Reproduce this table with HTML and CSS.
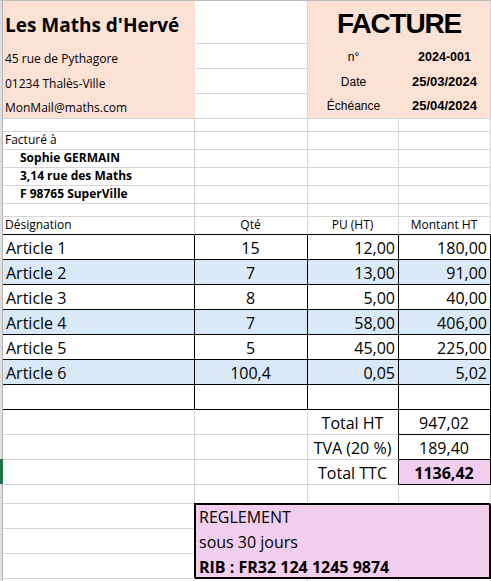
FILE: index.html
```html
<!DOCTYPE html>
<html lang="fr">
<head>
<meta charset="utf-8">
<title>Facture</title>
<link rel="stylesheet" href="styles.css">
</head>
<body>
<div class="sheet">
  <div class="gutter"></div>

  <div class="brand">
    <div class="brand-name">Les Maths d'Hervé</div>
    <div class="brand-line">45 rue de Pythagore</div>
    <div class="brand-line">01234 Thalès-Ville</div>
    <div class="brand-line">MonMail@maths.com</div>
  </div>

  <div class="inv">
    <div class="inv-title">FACTURE</div>
    <div class="inv-label">n°</div>
    <div class="inv-value">2024-001</div>
    <div class="inv-label">Date</div>
    <div class="inv-value date">25/03/2024</div>
    <div class="inv-label">Échéance</div>
    <div class="inv-value date">25/04/2024</div>
  </div>

  <!-- column B, rows 1-4 -->
  <div class="c"></div>
  <div class="c"></div>
  <div class="c"></div>
  <div class="c"></div>

  <!-- row 5 -->
  <div class="c"></div><div class="c"></div><div class="c"></div><div class="c"></div>

  <!-- rows 6-9 : client -->
  <div class="c cust">Facturé à</div><div class="c"></div><div class="c"></div><div class="c"></div>
  <div class="c cust bold indent">Sophie GERMAIN</div><div class="c"></div><div class="c"></div><div class="c"></div>
  <div class="c cust bold indent">3,14 rue des Maths</div><div class="c"></div><div class="c"></div><div class="c"></div>
  <div class="c cust bold indent">F 98765 SuperVille</div><div class="c"></div><div class="c"></div><div class="c"></div>

  <!-- row 10 -->
  <div class="c"></div><div class="c"></div><div class="c"></div><div class="c"></div>

  <!-- row 11 : headers -->
  <div class="c head">Désignation</div>
  <div class="c head mid">Qté</div>
  <div class="c head mid">PU (HT)</div>
  <div class="c head mid">Montant HT</div>

  <!-- rows 12-17 : articles -->
  <div class="c big tb art">Article 1</div><div class="c big tb mid">15</div><div class="c big tb num">12,00</div><div class="c big tb num">180,00</div>
  <div class="c big tb art blue">Article 2</div><div class="c big tb mid blue">7</div><div class="c big tb num blue">13,00</div><div class="c big tb num blue">91,00</div>
  <div class="c big tb art">Article 3</div><div class="c big tb mid">8</div><div class="c big tb num">5,00</div><div class="c big tb num">40,00</div>
  <div class="c big tb art blue">Article 4</div><div class="c big tb mid blue">7</div><div class="c big tb num blue">58,00</div><div class="c big tb num blue">406,00</div>
  <div class="c big tb art">Article 5</div><div class="c big tb mid">5</div><div class="c big tb num">45,00</div><div class="c big tb num">225,00</div>
  <div class="c big tb art blue">Article 6</div><div class="c big tb mid blue">100,4</div><div class="c big tb num blue">0,05</div><div class="c big tb num blue">5,02</div>

  <!-- row 18 -->
  <div class="c tb"></div><div class="c tb"></div><div class="c tb"></div><div class="c tb"></div>

  <!-- rows 19-21 : totals -->
  <div class="c"></div><div class="c"></div><div class="c big mid edge">Total HT</div><div class="c big mid tb">947,02</div>
  <div class="c"></div><div class="c"></div><div class="c big mid edge">TVA (20 %)</div><div class="c big mid tb">189,40</div>
  <div class="c"></div><div class="c"></div><div class="c big mid edge">Total TTC</div><div class="c big mid tb pink bold">1136,42</div>

  <!-- row 22 -->
  <div class="c"></div><div class="c"></div><div class="c"></div><div class="c"></div>

  <!-- column A, rows 23-25 -->
  <div class="c"></div>
  <div class="c"></div>
  <div class="c"></div>

  <!-- row 26 -->
  <div class="c"></div><div class="c"></div><div class="c"></div><div class="c"></div>

  <div class="reg">
    <div class="reg-line">REGLEMENT</div>
    <div class="reg-line">sous 30 jours</div>
    <div class="reg-line bold">RIB : FR32 124 1245 9874</div>
  </div>
</div>
</body>
</html>
```

FILE: styles.css
```css
* {
  box-sizing: border-box;
}

html,
body {
  margin: 0;
  padding: 0;
  background: #ffffff;
  overflow: hidden;
}

.sheet {
  display: grid;
  width: 491px;
  grid-template-columns: 3px 192px 113px 91px 92px;
  grid-template-rows: 43px repeat(3, 25px) 13px repeat(4, 18px) 13px 18px repeat(10, 25px) 19px repeat(3, 25px) 10px;
  border-top: 1px solid #bdbdbd;
  font-family: "Open Sans", sans-serif;
  color: #000000;
}

.gutter {
  grid-column: 1;
  grid-row: 1 / -1;
  background:
    linear-gradient(#217346, #217346) 0 458px / 3px 25px no-repeat,
    linear-gradient(#b4b4b4, #b4b4b4) 2px 0 / 1px 100% no-repeat,
    repeating-conic-gradient(#cfcfcf 0 25%, #f3eef2 0 50%) 0 0 / 2px 2px;
}

/* ---------- generic cell ---------- */
.c {
  display: flex;
  align-items: flex-end;
  min-width: 0;
  white-space: nowrap;
  border-right: 1px solid #d6d6d6;
  border-bottom: 1px solid #d6d6d6;
  padding: 0 3px 3px 2px;
  font-size: 12px;
  line-height: 12px;
}

.big {
  font-size: 16px;
  line-height: 16px;
}

.mid {
  justify-content: center;
}

.num {
  justify-content: flex-end;
}

.art {
  padding-left: 3px;
}

.bold {
  font-weight: 700;
}

.indent {
  padding-left: 17px;
}

.head {
  border-bottom-color: #000000;
}

.tb {
  border-right-color: #000000;
  border-bottom-color: #000000;
}

.edge {
  border-right-color: #000000;
}

.blue {
  background: #dae9f8;
}

.pink {
  background: #f2ceef;
}

/* ---------- company block ---------- */
.brand {
  grid-column: 2;
  grid-row: 1 / span 4;
  display: grid;
  grid-template-rows: 43px 25px 25px 1fr;
  background: #fbe2d5;
  border-right: 1px solid #fbe2d5;
  border-bottom: 1px solid #d6d6d6;
  padding-left: 2px;
}

.brand-name {
  display: flex;
  align-items: flex-end;
  padding-bottom: 9px;
  font-size: 19px;
  line-height: 19px;
  font-weight: 700;
  white-space: nowrap;
}

.brand-line {
  display: flex;
  align-items: flex-end;
  padding-bottom: 4px;
  font-size: 12px;
  line-height: 12px;
  white-space: nowrap;
}

/* ---------- invoice block ---------- */
.inv {
  grid-column: 4 / span 2;
  grid-row: 1 / span 4;
  display: grid;
  grid-template-columns: 91px 1fr;
  grid-template-rows: 43px 25px 25px 1fr;
  background: #fbe2d5;
  border-right: 1px solid #d6d6d6;
  border-bottom: 1px solid #d6d6d6;
  font-family: "Liberation Sans", Arial, sans-serif;
}

.inv-title {
  grid-column: 1 / -1;
  display: flex;
  justify-content: center;
  align-items: flex-end;
  padding-bottom: 6px;
  font-size: 28px;
  line-height: 28px;
  font-weight: 700;
  letter-spacing: -1.2px;
}

.inv-label,
.inv-value {
  display: flex;
  justify-content: center;
  align-items: flex-end;
  padding-bottom: 6px;
  font-size: 12px;
  line-height: 12px;
  white-space: nowrap;
}

.inv-value {
  font-weight: 700;
  font-size: 12.5px;
}

.inv-value.date {
  font-size: 13px;
}

/* ---------- payment block ---------- */
.reg {
  grid-column: 3 / span 3;
  grid-row: 23 / span 3;
  display: grid;
  grid-template-rows: 25px 25px 1fr;
  background: #f2ceef;
  border-style: solid;
  border-color: #000000;
  border-width: 1px 2px 2px 1px;
  box-shadow: -1px -1px 0 0 #000000;
  padding-left: 3px;
  font-size: 16px;
  line-height: 16px;
}

.reg-line {
  padding-top: 4px;
  white-space: nowrap;
}
```
